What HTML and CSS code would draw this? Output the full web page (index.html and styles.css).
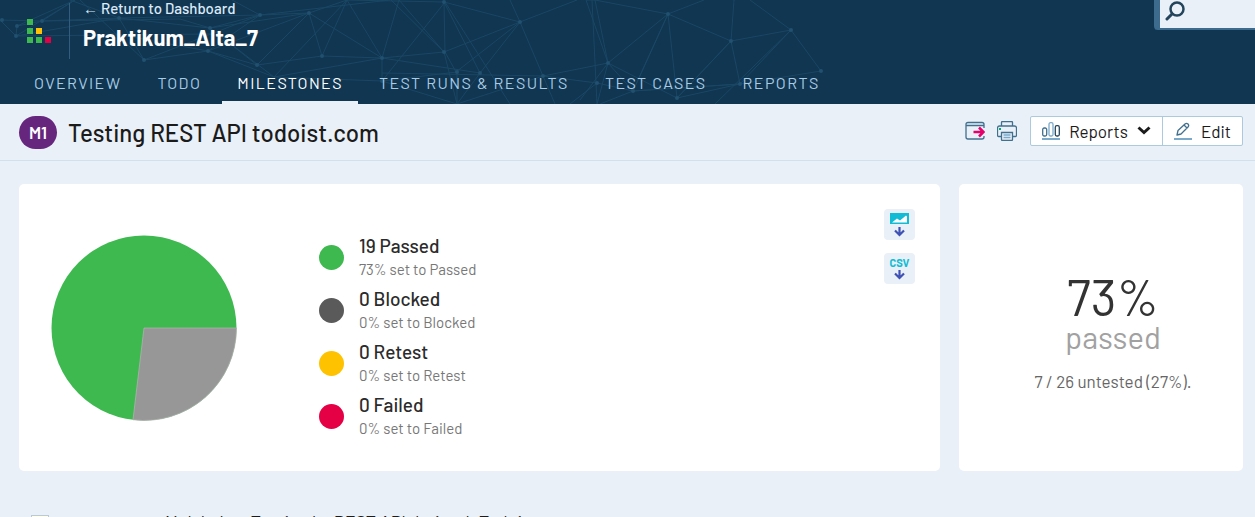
FILE: index.html
```html
<!DOCTYPE html>
<html lang="en">
<head>
<meta charset="utf-8">
<title>Testing REST API todoist.com</title>
<link rel="stylesheet" href="styles.css">
</head>
<body>
<header class="header">
  <svg class="network" width="830" height="104" viewBox="0 0 830 104" aria-hidden="true">
    <g fill="none" stroke="#1a4764" stroke-width="1">
      <path d="M0 20L42 21L17 26L16 36L0 20M17 26L75 0L16 36L119 18L42 21L180 19L210 28M16 36L210 34M42 21L75 0M80 0L144 60L119 18L260 15L210 28L309 13L260 15L144 60L208 51L257 65L322 56L382 58L274 77L208 51L110 33M70 0L119 18L210 28L257 65L309 13L322 56L347 0L274 77L210 28M260 15L208 51L309 13L382 58M232 0L260 15L390 0M309 13L347 0L382 58L399 0L444 52L382 58L382 81L274 77M347 0L444 2L445 52L456 72L520 22L444 2L480 73L520 22L543 76L608 63L595 0L586 0L608 63L668 14L595 0M444 52L520 22L510 0M520 22L577 0M608 63L580 100M608 63L597 104L592 0M608 63L633 91L668 14L677 98L731 41L668 14L704 0M608 63L677 98L740 84L633 91L668 14M731 41L740 84L791 30L731 41L734 0M791 30L750 0M791 30L821 71L740 84L633 91L597 83L543 76L382 73M382 81L457 72L457 104L382 81M444 52L457 104L480 73L382 58M391 0L444 52M457 104L543 76L555 104M597 83L570 104M633 91L600 104M791 30L715 104M677 98L731 41M445 2L510 104M445 2L382 81"/>
    </g>
    <g fill="#22506f"><circle cx="2" cy="20" r="2"/><circle cx="17" cy="26" r="2"/><circle cx="16" cy="36" r="2"/><circle cx="42" cy="21" r="2"/><circle cx="119" cy="18" r="2"/><circle cx="144" cy="60" r="2"/><circle cx="208" cy="51" r="2"/><circle cx="210" cy="28" r="2"/><circle cx="257" cy="65" r="2"/><circle cx="260" cy="15" r="2"/><circle cx="309" cy="13" r="2"/><circle cx="322" cy="56" r="2"/><circle cx="382" cy="58" r="2"/><circle cx="382" cy="81" r="2"/><circle cx="444" cy="2" r="2"/><circle cx="444" cy="52" r="2"/><circle cx="457" cy="72" r="2"/><circle cx="480" cy="73" r="2"/><circle cx="520" cy="22" r="2"/><circle cx="543" cy="76" r="2"/><circle cx="608" cy="63" r="2"/><circle cx="597" cy="83" r="2"/><circle cx="668" cy="14" r="2"/><circle cx="633" cy="91" r="2"/><circle cx="677" cy="98" r="2"/><circle cx="731" cy="41" r="2"/><circle cx="740" cy="84" r="2"/><circle cx="791" cy="30" r="2"/><circle cx="821" cy="71" r="2"/></g>
  </svg>
  <div class="brand">
    <svg class="logo" width="24" height="24" viewBox="0 0 24 24" aria-hidden="true">
      <path fill="#3eb950" d="M0 0h6v6H0zM0 9h6v6H0zM0 18h6v6H0zM9 18h6v6H9z"/>
      <path fill="#ffc107" d="M9 9h6v6H9z"/><path fill="#e50045" d="M18 18h6v6h-6z"/>
    </svg>
    <div class="project">
      <a class="back" href="#">← Return to Dashboard</a>
      <div class="project-name">Praktikum_Alta_7</div>
    </div>
  </div>
  <label class="search">
    <svg width="20" height="20" viewBox="0 0 20 20" fill="none" stroke="#24445b" stroke-width="2.500" stroke-linecap="round" aria-hidden="true"><circle cx="12" cy="8" r="6.500"/><path stroke-width="3" d="M7 13l-5 5"/></svg>
    <input type="text" aria-label="Search">
  </label>
  <nav class="tabs">
    <a href="#">OVERVIEW</a>
    <a href="#">TODO</a>
    <a class="active" href="#">MILESTONES</a>
    <a href="#">TEST RUNS &amp; RESULTS</a>
    <a href="#">TEST CASES</a>
    <a href="#">REPORTS</a>
  </nav>
</header>
<div class="titlebar">
  <span class="badge">M1</span>
  <h1>Testing REST API todoist.com</h1>
  <div class="tools">
    <button class="icon-button" aria-label="Export">
      <svg width="20" height="20" viewBox="0 0 20 20" fill="none" stroke="#41708f" stroke-width="1.300" aria-hidden="true"><path d="M19 7V3.500q0-2-2-2H3q-2 0-2 2V16q0 2 2 2h14q2 0 2-2v-1M1 4.500h18"/><path stroke="#e5006b" stroke-width="2.500" d="M8.500 11H18M14 6.500l4.500 4.500-4.500 4.500"/></svg>
    </button>
    <button class="icon-button" aria-label="Print">
      <svg width="20" height="20" viewBox="0 0 20 20" fill="none" stroke="#41708f" stroke-width="1.300" aria-hidden="true"><path d="M4.500 5V1.500q0-1 1-1h9q1 0 1 1V5M4.500 15.500H1.500q-1 0-1-1V7q0-2 2-2h15q2 0 2 2v7.500q0 1-1 1h-3M4.500 11.500h11v7q0 1-1 1h-9q-1 0-1-1z"/><path stroke="#7ba9ca" d="M6.500 14h7M6.500 16.500h7"/><path stroke="#00a878" stroke-width="2" d="M2 8h2"/></svg>
    </button>
    <div class="actions">
      <button class="action">
        <svg width="18" height="18" viewBox="0 0 18 18" fill="none" aria-hidden="true"><path stroke="#7ba9ca" stroke-width="2" d="M0 17h18"/><rect x=".7" y="6" width="4" height="8" rx="1.500" stroke="#41708f" stroke-width="1.300"/><rect x="7" y=".7" width="4" height="13.300" rx="1.500" stroke="#7ba9ca" stroke-width="1.300"/><rect x="13.300" y="3.700" width="4" height="10.300" rx="1.500" stroke="#24445b" stroke-width="1.300"/></svg>
        <span>Reports</span>
        <svg width="14" height="9" viewBox="0 0 14 9" fill="none" stroke="#1b1b1b" stroke-width="3" aria-hidden="true"><path d="M1.500 1.500L7 6.500l5.500-5"/></svg>
      </button>
      <button class="action edit">
        <svg width="18" height="18" viewBox="0 0 18 18" fill="none" aria-hidden="true"><path stroke="#7ba9ca" stroke-width="2" d="M0 17h18"/><path stroke="#41708f" stroke-width="1.300" stroke-linejoin="round" d="M3 13l1-4.500L11 2q1.500-1.300 3 0 1.300 1.500 0 3L7 12zM10 3l3 3"/></svg>
        <span>Edit</span>
      </button>
    </div>
  </div>
</div>
<main class="content">
  <div class="panels">
    <section class="card chart">
      <svg class="pie" width="186" height="186" viewBox="-93 -93 186 186" role="img" aria-label="73% passed, 27% untested">
        <circle r="92.500" fill="#3eb950"/>
        <path fill="#979797" stroke="#b5b5b5" stroke-width=".7" d="M0 0H92.500A92.500 92.500 0 0 1-11 91.800z"/>
      </svg>
      <ul class="legend">
        <li><i class="dot passed"></i><div><strong>19 Passed</strong><small>73% set to Passed</small></div></li>
        <li><i class="dot blocked"></i><div><strong>0 Blocked</strong><small>0% set to Blocked</small></div></li>
        <li><i class="dot retest"></i><div><strong>0 Retest</strong><small>0% set to Retest</small></div></li>
        <li><i class="dot failed"></i><div><strong>0 Failed</strong><small>0% set to Failed</small></div></li>
      </ul>
      <div class="downloads">
        <button aria-label="Download image">
          <svg width="19" height="24" viewBox="0 0 19 24" aria-hidden="true"><path fill="#12bcd4" d="M0 0h19v11H0z"/><path fill="#fff" d="M2 9.500l5-4 3 2 6-5 1 1v6z"/><path fill="none" stroke="#3f51b5" stroke-width="2.200" d="M9.500 14v8M5 17.500l4.500 4.500 4.500-4.500"/></svg>
        </button>
        <button aria-label="Download CSV">
          <span>CSV</span>
          <svg width="19" height="11" viewBox="0 0 19 11" aria-hidden="true"><path fill="none" stroke="#3f51b5" stroke-width="2.200" d="M9.500 1v8M5 4.500L9.500 9 14 4.500"/></svg>
        </button>
      </div>
    </section>
    <section class="card summary">
      <div class="percent">73%</div>
      <div class="state">passed</div>
      <div class="untested">7 / 26 untested (27%).</div>
    </section>
  </div>
  <div class="description"><span class="note"></span><p>Melakukan Testing ke REST API dari web Todoist</p></div>
</main>
</body>
</html>
```
FILE: styles.css
```css
* { box-sizing: border-box; }
html { height: 100%; overflow: hidden; }
body { margin: 0; height: 100%; overflow: hidden; background: #e9f0f7; color: #1b1b1b; font-family: Barlow, Roboto, "Liberation Sans", sans-serif; font-size: 16px; }
button { font: inherit; color: inherit; border: 0; padding: 0; background: none; cursor: pointer; }
a { text-decoration: none; }
svg { display: block; flex: none; }

.header { position: relative; overflow: hidden; background: #103652; }
.network { position: absolute; left: 0; top: 0; }
.brand { position: relative; display: flex; height: 63px; padding: 0 27px; }
.logo { margin-top: 19px; }
.project { margin: 3px 0 4px 18px; padding-left: 13px; border-left: 1px solid #315d7e; color: #fff; }
.back { display: block; margin-top: -3px; line-height: 17px; font-size: 15px; font-weight: 500; color: #dceaf8; }
.project-name { margin-top: 6px; line-height: 28px; font-size: 22px; font-weight: 700; }
.search { position: absolute; top: 0; right: 0; display: flex; width: 101px; height: 30px; padding: 1px 0 0 5px; border: solid #3c6b8e; border-width: 0 0 2px 6px; border-radius: 0 0 0 4px; background: #e9f0f7; }
.search input { width: 70px; border: 0; background: none; outline: 0; }
.tabs { position: relative; display: flex; gap: 6px; padding-left: 19px; }
.tabs a { height: 41px; padding: 0 15px; line-height: 39px; font-size: 16px; letter-spacing: 0.09em; color: #a9cbe3; }
.tabs .active { color: #fff; border-bottom: 3px solid #e9f0f7; }

.titlebar { display: flex; align-items: center; height: 57px; padding: 0 12px 0 19px; border-bottom: 1px solid #cfe1ed; }
.badge { width: 38px; height: 33px; border-radius: 17px; background: #66267e; color: #fff; text-align: center; line-height: 33px; font-size: 17px; font-weight: 600; }
h1 { margin: 0 0 0 11px; font-size: 24px; font-weight: 500; }
.tools { display: flex; align-items: center; gap: 12px; margin: 0 0 3px auto; }
.actions { display: flex; margin-left: 1px; height: 30px; border: 1px solid #acc9dd; border-radius: 2px; background: #fff; }
.action { display: flex; align-items: center; gap: 9px; padding: 0 11px; font-size: 17px; }
.edit { border-left: 1px solid #acc9dd; }

.content { padding: 23px 12px 0 19px; }
.panels { display: grid; grid-template-columns: 921fr 284fr; gap: 19px; }
.card { border-radius: 5px; background: #fff; min-height: 287px; }
.chart { display: flex; align-items: center; padding: 0 25px 0 32px; }
.legend { display: grid; gap: 7px; margin: 18px 0 0 82px; padding: 0; list-style: none; }
.legend li { display: flex; align-items: center; gap: 15px; }
.dot { width: 25px; height: 25px; border-radius: 50%; }
.passed { background: #3eb950; }
.blocked { background: #5a5a5a; }
.retest { background: #fec200; }
.failed { background: #e50045; }
.legend strong { display: block; line-height: 24px; font-size: 19px; font-weight: 500; color: #2b2b2b; }
.legend small { display: block; line-height: 22px; font-size: 15px; color: #777; }
.downloads { align-self: flex-start; display: grid; gap: 13px; margin: 25px 0 0 auto; }
.downloads button { display: grid; place-content: center; justify-items: center; width: 31px; height: 31px; border-radius: 4px; background: #e9f0f7; }
.downloads span { line-height: 12px; font-size: 11px; font-weight: 700; color: #12bcd4; }
.summary { display: flex; flex-direction: column; align-items: center; padding: 86px 0 0 24px; }
.percent { line-height: 52px; font-size: 50px; font-weight: 400; color: #333; }
.state { line-height: 30px; font-size: 31px; color: #a1a1a1; }
.untested { margin-top: 19px; line-height: 20px; font-size: 17px; color: #666; }
.description { display: flex; margin-top: 40px; }
.note { width: 18px; height: 20px; margin: 4px 0 0 12px; border: 1px solid #b9c9d8; background: #ffffec; }
.description p { margin: 0 0 0 116px; line-height: 20px; font-size: 18px; }
```
